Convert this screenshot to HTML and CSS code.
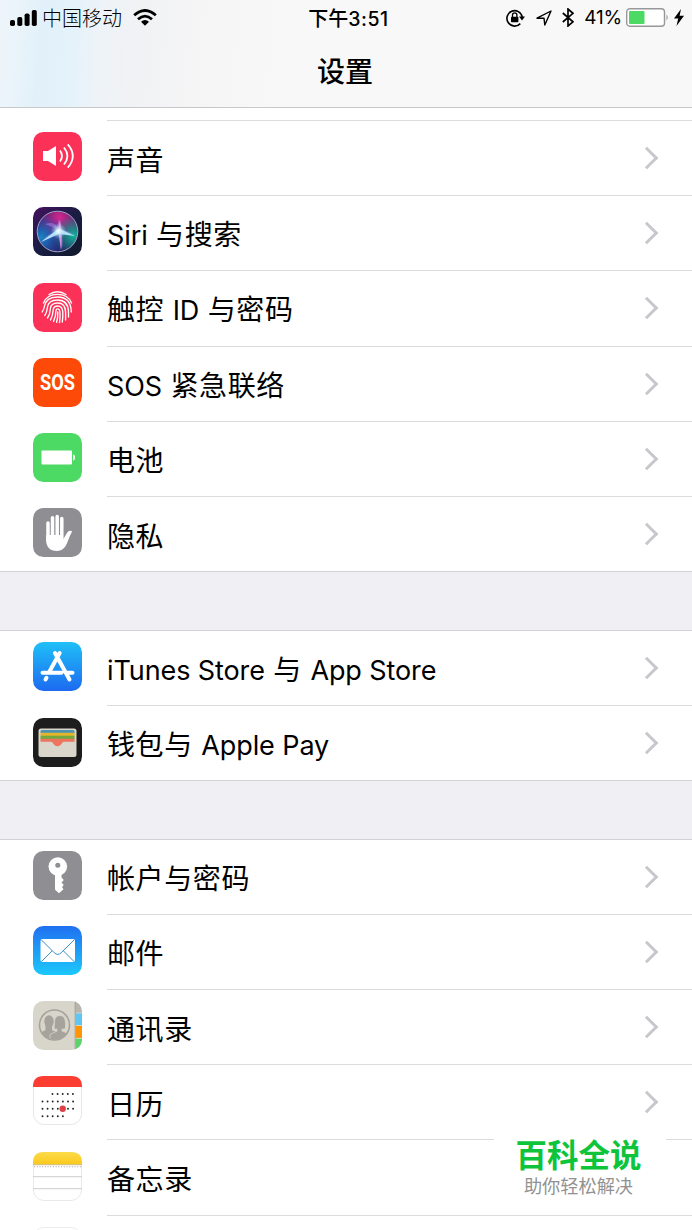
FILE: index.html
```html
<!DOCTYPE html>
<html lang="zh-CN">
<head>
    <meta charset="UTF-8">
    <meta name="viewport" content="width=device-width, initial-scale=1.0">
    <title>设置</title>
    <link rel="stylesheet" href="styles.css">
</head>
<body>
    <div class="screen">
        <header class="header">
            <!-- Status bar -->
            <div class="status-bar">
                <div class="status-left">
                    <svg width="27" height="17" viewBox="0 0 27 17"><rect x="0" y="11" width="5" height="6" rx="1.8"/><rect x="7.3" y="8" width="5" height="9" rx="1.8"/><rect x="14.6" y="4.5" width="5" height="12.5" rx="1.8"/><rect x="21.8" y="1" width="5" height="16" rx="1.8"/></svg>
                    <span class="carrier">中国移动</span>
                    <svg class="wifi" width="24" height="17" viewBox="0 0 24 17"><g fill="none" stroke="#000" stroke-width="2.8"><path d="M1.2 6.2Q12-3.3 22.8 6.2"/><path d="M5 10.2Q12 4 19 10.2"/></g><path d="M8 12.7Q12 9.5 16 12.7L12 16.8Z"/></svg>
                </div>
                <div class="status-time">下午<span>3:51</span></div>
                <div class="status-right">
                    <svg width="19" height="18" viewBox="0 0 19 18"><path d="M14.3 14.6A7.7 7.7 0 1 1 16.2 8" fill="none" stroke="#000" stroke-width="1.6"/><path d="M13 7.5h6l-3 4z"/><rect x="5" y="7.7" width="7.4" height="5.6" rx=".8"/><path d="M6.5 8V6a2.2 2.2 0 0 1 4.4 0v2" fill="none" stroke="#000" stroke-width="1.3"/></svg>
                    <svg class="location" width="16" height="16" viewBox="0 0 16 16"><path d="M1 8.2L15 1 8.8 15 8 8.2z" fill="none" stroke="#000" stroke-width="1.4" stroke-linejoin="round"/></svg>
                    <svg class="bluetooth" width="12" height="19" viewBox="0 0 12 19"><path d="M.8 5L11 13.8 6 18V1l5 4.3L.8 14" fill="none" stroke="#000" stroke-width="1.7"/></svg>
                    <span class="percent">41%</span>
                    <svg class="battery" width="43" height="19" viewBox="0 0 43 19"><rect x=".7" y=".7" width="37.8" height="17.6" rx="3.2" fill="#fff" stroke="#98989b" stroke-width="1.4"/><rect x="3" y="3" width="15.5" height="13" rx="1" fill="#4cd964"/><path d="M40.5 6.5q2.5 3 0 6z" fill="#98989b"/></svg>
                    <svg class="bolt" width="10" height="17" viewBox="0 0 10 17"><path d="M7 0L0 9.6h4.2L2.5 17 10 6.8H5.6z"/></svg>
                </div>
            </div>
            <h1 class="title">设置</h1>
        </header>

        <main class="settings">
            <!-- General group -->
            <ul class="group group-first">
                <li class="row">
                    <svg class="icon" viewBox="0 0 49 49"><rect width="49" height="49" rx="10.5" fill="#fc3158"/><path d="M10 19h5l8-5v20l-8-5h-5z" fill="#fff"/><g fill="none" stroke="#fff" stroke-width="1.8"><path d="M27 18.5q4 5.5 0 11"/><path d="M31 15.5q6.8 8.5 0 17"/><path d="M34.8 12.3q10 11.7 0 23.4"/></g></svg>
                    <div class="row-body"><span class="label">声音</span><i class="chevron"></i></div>
                </li>
                <li class="row">
                    <svg class="icon" viewBox="0 0 49 49">
                        <defs>
                            <linearGradient id="siriBg" x1="0" y1="0" x2="1" y2="1"><stop offset="0" stop-color="#45105f"/><stop offset=".5" stop-color="#191d43"/><stop offset="1" stop-color="#101a2b"/></linearGradient>
                            <radialGradient id="siriPink" cx=".55" cy=".15" r=".6"><stop offset="0" stop-color="#d32690"/><stop offset="1" stop-color="#d32690" stop-opacity="0"/></radialGradient>
                            <radialGradient id="siriBlue" cx=".1" cy=".65" r=".6"><stop offset="0" stop-color="#1787c5"/><stop offset="1" stop-color="#285de0" stop-opacity="0"/></radialGradient>
                            <radialGradient id="siriTeal" cx=".9" cy=".6" r=".5"><stop offset="0" stop-color="#12b49a"/><stop offset="1" stop-color="#12a896" stop-opacity="0"/></radialGradient>
                            <radialGradient id="siriGlow"><stop offset="0" stop-color="#fff"/><stop offset=".25" stop-color="#dff" stop-opacity=".8"/><stop offset="1" stop-color="#8cf" stop-opacity="0"/></radialGradient>
                        </defs>
                        <rect width="49" height="49" rx="10.5" fill="url(#siriBg)"/>
                        <circle cx="24.5" cy="24.5" r="20.3" fill="#25215e"/><circle cx="24.5" cy="24.5" r="20.3" fill="url(#siriPink)"/><circle cx="24.5" cy="24.5" r="20.3" fill="url(#siriBlue)"/><circle cx="24.5" cy="24.5" r="20.3" fill="url(#siriTeal)"/>
                        <path d="M12 17Q24 13 25 24Q15 26 8 35Q18 31 25 26Q27 35 28 43Q32 34 27 26Q34 27 42 28Q36 24 27 22Q29 16 26 12Q24 18 24 22Z" fill="#a58cf0" opacity=".5"/>
                        <path d="M25 22L8 35 26 27 42 29 27 22z" fill="#bff5ff" opacity=".85"/>
                        <path d="M25 22l3 21 1-17-2-13z" fill="#f8a0e0" opacity=".75"/>
                        <circle cx="25.5" cy="24" r="8" fill="url(#siriGlow)"/>
                        <circle cx="24.5" cy="24.5" r="20.3" fill="none" stroke="#a5a4c6" stroke-width="1"/>
                    </svg>
                    <div class="row-body"><span class="label"><span class="latin">Siri</span> 与搜索</span><i class="chevron"></i></div>
                </li>
                <li class="row">
                    <svg class="icon" viewBox="0 0 49 49"><rect width="49" height="49" rx="10.5" fill="#fc3158"/><g fill="none" stroke="#fff" stroke-width="1.35" stroke-linecap="round"><path d="M16 11.5Q24.5 6 33 11.5"/><path d="M10.5 20Q14 11.4 24.5 11.4T38.5 20"/><path d="M9.2 29Q11 26 11.4 23.5Q13 14 24.5 14Q38 14 38.3 29"/><path d="M11.8 32.5Q14 29 14.3 25Q15 17 24.5 17Q35 17 35.5 28.5V34"/><path d="M14.5 35Q17.2 31 17.3 26Q17.6 20 24.7 20Q32.3 20 32.6 29V37"/><path d="M17.5 37Q20 32 20.2 27Q20.4 23 24.8 23Q29.3 23 29.8 29Q30 34 29.3 39"/><path d="M20.5 38.5Q23 33 23 27.5Q23 25.8 24.8 25.8Q26.8 25.8 27 30Q27.2 35 26.5 39.5"/><path d="M24.8 29Q25 35 23.6 39.4"/></g></svg>
                    <div class="row-body"><span class="label">触控 <span class="latin">ID</span> 与密码</span><i class="chevron"></i></div>
                </li>
                <li class="row">
                    <svg class="icon" viewBox="0 0 49 49"><rect width="49" height="49" rx="10.5" fill="#fd4a09"/><text class="sos" x="24.5" y="32.2" text-anchor="middle" textLength="35" lengthAdjust="spacingAndGlyphs">SOS</text></svg>
                    <div class="row-body"><span class="label"><span class="latin">SOS</span> 紧急联络</span><i class="chevron"></i></div>
                </li>
                <li class="row">
                    <svg class="icon" viewBox="0 0 49 49"><rect width="49" height="49" rx="10.5" fill="#4cd964"/><rect x="8.5" y="17.5" width="30.5" height="14" rx=".8" fill="#fff"/><path d="M40 21.5q2 0 2 3t-2 3z" fill="#fff"/></svg>
                    <div class="row-body"><span class="label">电池</span><i class="chevron"></i></div>
                </li>
                <li class="row">
                    <svg class="icon" viewBox="0 0 49 49"><rect width="49" height="49" rx="10.5" fill="#8e8e93"/><path d="M13.2 27h16.6v5l4.3-7.2q1.7-3 4.5-1.8.8.4 0 1.6-2 3.6-3.6 8.200C32.700 39.500 29.500 43 24 43c-7 0-10.500-4-10.800-10z" fill="#fff"/><g stroke="#fff" stroke-width="3.5" stroke-linecap="round"><path d="M15 15V33M19.500 9.700V32M24.200 8.500V32M28.800 10.500V33"/></g></svg>
                    <div class="row-body"><span class="label">隐私</span><i class="chevron"></i></div>
                </li>
            </ul>

            <!-- Store group -->
            <ul class="group group-store">
                <li class="row">
                    <svg class="icon" viewBox="0 0 49 49">
                        <defs><linearGradient id="storeBg" x1="0" y1="0" x2="0" y2="1"><stop offset="0" stop-color="#1fc0f7"/><stop offset="1" stop-color="#1d6af0"/></linearGradient></defs>
                        <rect width="49" height="49" rx="10.5" fill="url(#storeBg)"/><g stroke="#fff" stroke-width="4" stroke-linecap="round" fill="none"><path d="M26.700 11L16.500 29.500M22 11l14.500 26.500M9.500 30.700h19M34.500 30.700h5M13.500 35.800l-1 1.700"/></g>
                    </svg>
                    <div class="row-body"><span class="label"><span class="latin">iTunes Store</span> 与 <span class="latin">App Store</span></span><i class="chevron"></i></div>
                </li>
                <li class="row">
                    <svg class="icon" viewBox="0 0 49 49"><rect width="49" height="49" rx="10.5" fill="#1e1d1e"/><rect x="5.500" y="10.500" width="38" height="28.500" rx="2.500" fill="#dad6cc"/><path d="M7.500 15v-1.500q0-1.500 1.500-1.500h31q1.500 0 1.500 1.500V15z" fill="#4c94b0"/><path d="M7.500 14.700h34v3.500h-34z" fill="#e4b52d"/><path d="M7.500 17.700h34v3.500h-34z" fill="#72a83c"/><path d="M7.500 20.700h34v3H31c-2.300 0-2.500 4.500-6.500 4.500s-4.200-4.500-6.500-4.500H7.500z" fill="#ed745f"/></svg>
                    <div class="row-body"><span class="label">钱包与 <span class="latin">Apple Pay</span></span><i class="chevron"></i></div>
                </li>
            </ul>

            <!-- Apps group -->
            <ul class="group group-last">
                <li class="row">
                    <svg class="icon" viewBox="0 0 49 49"><rect width="49" height="49" rx="10.5" fill="#8e8e93"/><circle cx="24.800" cy="15.500" r="9.300" fill="#fff"/><path d="M22 23h6.500v3.500l2.300 2.500-2.300 2.500 2.300 2.500-1.800 2 1.500 2.300-4.500 4-4-3.500z" fill="#fff"/><circle cx="24.800" cy="14.200" r="2.500" fill="#8e8e93"/></svg>
                    <div class="row-body"><span class="label">帐户与密码</span><i class="chevron"></i></div>
                </li>
                <li class="row">
                    <svg class="icon" viewBox="0 0 49 49">
                        <defs><linearGradient id="mailBg" x1="0" y1="0" x2="0" y2="1"><stop offset="0" stop-color="#2070f0"/><stop offset="1" stop-color="#1cc8fb"/></linearGradient></defs>
                        <rect width="49" height="49" rx="10.5" fill="url(#mailBg)"/><rect x="7.500" y="13" width="34.500" height="23" rx="2" fill="#fff"/><path d="M8.500 14l12.800 12.800q3.400 3.200 6.800 0L41 14M8.500 35.500l10.700-10.700M41 35.500L30.300 24.800" fill="none" stroke="#3b91c6" stroke-width="1"/>
                    </svg>
                    <div class="row-body"><span class="label">邮件</span><i class="chevron"></i></div>
                </li>
                <li class="row">
                    <svg class="icon" viewBox="0 0 49 49">
                        <defs><clipPath id="round"><rect width="49" height="49" rx="10.5"/></clipPath><clipPath id="contactCircle"><circle cx="21.500" cy="24" r="14.500"/></clipPath></defs>
                        <g clip-path="url(#round)"><rect width="49" height="49" fill="#d8d5ca"/><rect x="42" width="7" height="12" fill="#b8b5ad"/><rect x="42.700" y="12" width="6.300" height="12" fill="#5fc6f1"/><rect x="42.700" y="24.500" width="6.300" height="12.500" fill="#ff9500"/><rect x="42.700" y="37.500" width="6.300" height="12" fill="#5bd36a"/><path d="M42.200 0v49" stroke="#aaa79e" stroke-width="1.200"/><path d="M43 12h6M43 24.500h6M43 37.300h6" stroke="#dedbd0" stroke-width=".8"/></g>
                        <g fill="#a6a29c" clip-path="url(#contactCircle)"><ellipse cx="16" cy="20.500" rx="4.700" ry="6.200"/><path d="M12.500 24h6.500v5l4 2v9H5v-7l7.500-4z"/><path d="M27 14.500q5.500 0 5.500 8v5q-2 .8-3.500.6v2l7 2.500v7H17v-6l7-3.500v-2q-2 .2-3-.6.500-3 .5-6 0-7 5.500-7z" stroke="#d8d5ca" stroke-width=".8"/></g><circle cx="21.500" cy="24" r="15" fill="none" stroke="#a6a29c" stroke-width="1.600"/>
                    </svg>
                    <div class="row-body"><span class="label">通讯录</span><i class="chevron"></i></div>
                </li>
                <li class="row">
                    <svg class="icon" viewBox="0 0 49 49"><rect x=".5" y=".5" width="48" height="48" rx="10.500" fill="#fff" stroke="#e7e7e7"/><path d="M0 11V10.500Q0 0 10.500 0h28Q49 0 49 10.500V11z" fill="#fc3d32"/><g stroke="#222" stroke-width="1.900" stroke-linecap="round" stroke-dasharray="0 5.100"><path d="M19.500 18H41M9.500 25.500H41M9.500 32.800H41M9.500 40.300H31"/></g><circle cx="29.700" cy="32.800" r="3.200" fill="#dc4348"/></svg>
                    <div class="row-body"><span class="label">日历</span><i class="chevron"></i></div>
                </li>
                <li class="row">
                    <svg class="icon" viewBox="0 0 49 49">
                        <defs><linearGradient id="notesBg" x1="0" y1="0" x2="0" y2="1"><stop offset="0" stop-color="#fbdb4b"/><stop offset="1" stop-color="#fcc91c"/></linearGradient></defs>
                        <rect x=".5" y=".5" width="48" height="48" rx="10.500" fill="#fff" stroke="#e9e9e9"/><path d="M0 12.500v-2Q0 0 10.500 0h28Q49 0 49 10.500v2z" fill="url(#notesBg)"/><path d="M0 12.700h49" stroke="#c5b16d" stroke-width=".8"/><path d="M1 14.800h47" stroke="#aaa" stroke-width="1.100" stroke-dasharray="1.100 1.600"/><path d="M0 24.700h49M0 36.700h49" stroke="#cdcdcd"/>
                    </svg>
                    <div class="row-body"><span class="label">备忘录</span><i class="chevron"></i></div>
                </li>
                <li class="row row-next">
                    <svg class="icon" viewBox="0 0 49 49"><rect x=".5" y=".5" width="48" height="48" rx="10.500" fill="#fff" stroke="#ededed"/></svg>
                </li>
            </ul>
        </main>

        <!-- Watermark over the list -->
        <div class="watermark">
            <strong>百科全说</strong>
            <span>助你轻松解决</span>
        </div>
    </div>
</body>
</html>
```
FILE: styles.css
```css
* {
    box-sizing: border-box;
}
body {
    margin: 0;
    font-family: Inter, "Noto Sans CJK SC", sans-serif;
    color: #000;
    background-color: #efeff4;
}
.screen {
    position: relative;
    height: 1230px;
    overflow: hidden;
}
.header {
    height: 108px;
    border-bottom: 1px solid #c8c8ca;
    background: linear-gradient(94deg, #eef5fa 0, #eaf4fa 18px, #e2f1f9 42px, #e4f2fa 75px, #edf3f8 100px, #f1f2f4 140px, #f5f5f6 200px, #f8f8f8 280px);
}
.status-bar {
    display: grid;
    grid-template-columns: 1fr auto 1fr;
    align-items: center;
    height: 35px;
    padding: 0 8px 0 10px;
    font-size: 19px;
}
.status-left, .status-right {
    display: flex;
    align-items: center;
}
.status-right {
    justify-content: flex-end;
}
.status-bar svg {
    flex: none;
}
.carrier {
    margin-left: 5px;
    font-size: 20px;
    font-weight: 300;
}
.wifi {
    margin-left: 11px;
}
.status-time {
    margin-left: 3px;
    font-size: 20px;
    font-weight: 500;
}
.status-time span {
    font-size: 19.5px;
    letter-spacing: 0.5px;
}
.location {
    margin-left: 11px;
}
.bluetooth {
    margin-left: 10px;
}
.percent {
    margin-left: 10px;
    letter-spacing: -0.2px;
}
.battery {
    margin-left: 4px;
}
.bolt {
    margin-left: 5px;
}
.title {
    margin: 17px 2px 0 0;
    font-size: 28px;
    line-height: 40px;
    font-weight: 500;
    text-align: center;
}
.group {
    margin: 0 0 58px;
    padding: 0;
    list-style: none;
    background-color: #fff;
    border-top: 1px solid #d3d3d7;
    border-bottom: 1px solid #d3d3d7;
}
.group-first {
    padding-top: 13px;
    border-top: 0;
    background: linear-gradient(#dcdcde, #dcdcde) 107px 12px / 100% 1px no-repeat #fff;
}
.group-last {
    margin-bottom: 0;
}
.row {
    display: flex;
    height: 75.2px;
    padding-left: 33px;
}
.row:last-child {
    height: 74.2px;
}
.group-store .row:last-child {
    height: 73.4px;
}
.icon {
    flex: none;
    width: 49px;
    height: 49px;
    margin-top: 11.2px;
}
.row-body {
    display: flex;
    flex: 1;
    align-items: center;
    justify-content: space-between;
    margin-left: 25px;
    padding-right: 33px;
    border-bottom: 1px solid #dcdcde;
}
.row:last-child .row-body {
    border-bottom: 0;
}
.label {
    padding-top: 5px;
    font-size: 28px;
    line-height: 40px;
    font-weight: 400;
    letter-spacing: 0.6px;
    white-space: pre;
}
.latin {
    font-size: 27px;
    letter-spacing: -0.1px;
}
.chevron {
    width: 16px;
    height: 16px;
    border-top: 3px solid #c7c7cc;
    border-right: 3px solid #c7c7cc;
    transform: translateX(-4px) rotate(45deg);
}
.sos {
    font-family: Roboto, sans-serif;
    font-size: 22px;
    font-weight: 700;
    fill: #fff;
}
.watermark {
    position: absolute;
    left: 494px;
    top: 1137px;
    width: 172px;
    height: 70px;
    padding-right: 3px;
    background-color: #fff;
    text-align: center;
}
.watermark strong {
    display: block;
    font-size: 31.5px;
    line-height: 38px;
    font-weight: 700;
    color: #0dc43b;
}
.watermark span {
    display: block;
    font-size: 18.2px;
    line-height: 22px;
    color: #929292;
}
```
